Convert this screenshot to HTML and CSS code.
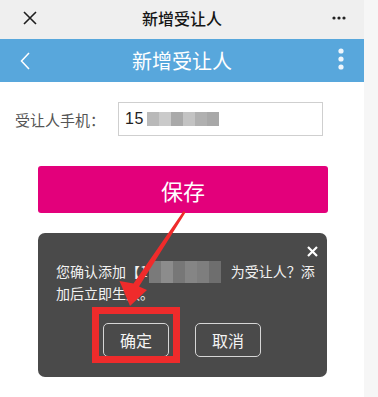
FILE: index.html
```html
<!DOCTYPE html>
<html lang="zh">
<head>
<meta charset="utf-8">
<title>新增受让人</title>
<link rel="stylesheet" href="styles.css">
</head>
<body>
<div class="app">
  <header class="topbar">
    <svg class="tb-close" width="14" height="14" viewBox="0 0 14 14"><path d="M1 1L13 13M13 1L1 13" stroke="#1e1e1e" stroke-width="1.6" fill="none"/></svg>
    <div class="tb-title">新增受让人</div>
    <svg class="tb-more" width="14" height="4" viewBox="0 0 14 4"><circle cx="2" cy="2" r="1.6" fill="#222"/><circle cx="7" cy="2" r="1.6" fill="#222"/><circle cx="12" cy="2" r="1.6" fill="#222"/></svg>
  </header>
  <nav class="navbar">
    <svg class="nb-back" width="10" height="18" viewBox="0 0 10 18"><path d="M9 1L1.5 9L9 17" stroke="#fff" stroke-width="1.5" fill="none"/></svg>
    <div class="nb-title">新增受让人</div>
    <svg class="nb-more" width="6" height="22" viewBox="0 0 6 22"><circle cx="3" cy="3" r="2.6" fill="#eef6fc"/><circle cx="3" cy="11" r="2.6" fill="#eef6fc"/><circle cx="3" cy="19" r="2.6" fill="#eef6fc"/></svg>
  </nav>
  <main class="content">
    <div class="form-row">
      <label class="form-label">受让人手机：</label>
      <div class="form-input"><span class="num">15</span><span class="mosaic mosaic-light"></span></div>
    </div>
    <button class="save-btn">保存</button>
    <div class="dialog">
      <svg class="dlg-close" width="11" height="11" viewBox="0 0 11 11"><path d="M1 1L10 10M10 1L1 10" stroke="#fff" stroke-width="2.2" fill="none"/></svg>
      <p class="dlg-text">您确认添加【1<span class="mosaic mosaic-dark"></span>为受让人？添<br>加后立即生效。</p>
      <div class="dlg-actions">
        <button class="dlg-btn">确定</button>
        <button class="dlg-btn">取消</button>
      </div>
    </div>
  </main>
  <div class="mark-box"></div>
  <svg class="mark-arrow" width="378" height="397" viewBox="0 0 378 397"><polygon points="183.5,211 185.5,212.5 139,286.5 147,290 130,306 119.5,281 133.5,283.5" fill="#ef2b2b"/></svg>
</div>
</body>
</html>
```
FILE: styles.css
```css
* { box-sizing: border-box; }
html, body { margin: 0; padding: 0; }
body {
  background: #f6f6f6;
  font-family: "Noto Sans CJK SC", "Noto Sans", sans-serif;
  width: 378px;
  height: 397px;
  overflow: hidden;
}
.app {
  width: 364px;
  height: 397px;
  background: #fff;
}
.topbar {
  height: 39px;
  background: #efefef;
  display: grid;
  grid-template-columns: 1fr auto 1fr;
  align-items: center;
  padding-bottom: 3px;
}
.tb-close { justify-self: start; margin-left: 23px; }
.tb-title { font-size: 16px; color: #151515; font-weight: 500; }
.tb-more { justify-self: end; margin-right: 18px; }
.navbar {
  height: 43px;
  background: #58a7dc;
  display: grid;
  grid-template-columns: 1fr auto 1fr;
  align-items: center;
}
.nb-back { justify-self: start; margin-left: 20px; }
.nb-title { font-size: 20px; color: #fff; font-weight: 400; }
.nb-more { justify-self: end; margin-right: 20px; margin-top: -4px; }
.content { padding-top: 20px; }
.form-row { display: flex; align-items: center; }
.form-label {
  width: 118px;
  padding-left: 15px;
  font-size: 15px;
  color: #555;
}
.form-input {
  width: 205px;
  height: 34px;
  border: 1px solid #cfcfcf;
  display: flex;
  align-items: center;
  padding-left: 6px;
  font-family: "Liberation Sans", sans-serif;
  font-size: 16px;
  color: #222;
}
.num { letter-spacing: 0.5px; }
.mosaic { display: inline-block; }
.mosaic-light {
  width: 72px;
  height: 14px;
  margin-left: 3px;
  background:
    linear-gradient(90deg, #b9b9b9 0 12px, #cacaca 12px 24px, #a9a9a9 24px 36px, #c3c3c3 36px 48px, #b0b0b0 48px 60px, #a8a8a8 60px 72px);
}
.save-btn {
  display: block;
  margin: 30px 0 0 38px;
  width: 290px;
  height: 47px;
  border: 0;
  border-radius: 3px;
  background: #e3007b;
  color: #fff;
  font-family: "Noto Sans CJK SC", sans-serif;
  font-size: 22px;
  padding: 0;
}
.dialog {
  position: relative;
  margin: 20px 0 0 38px;
  width: 289px;
  height: 144px;
  background: #4a4a4a;
  border-radius: 7px;
  padding: 28px 14px 0 18px;
}
.dlg-close { position: absolute; left: 269px; top: 13px; }
.dlg-text {
  margin: 0;
  font-size: 14px;
  line-height: 21px;
  color: #f2f2f2;
  white-space: nowrap;
}
.mosaic-dark {
  width: 72px;
  height: 22px;
  vertical-align: -6px;
  margin: 0 10px 0 1px;
  background:
    linear-gradient(90deg, #7a7a7a 0 12px, #8c8c8c 12px 24px, #777 24px 36px, #858585 36px 48px, #7e7e7e 48px 60px, #6e6e6e 60px 72px);
}
.dlg-actions {
  display: flex;
  justify-content: center;
  gap: 26px;
  margin-top: 19px;
  margin-left: -5px;
}
.dlg-btn {
  width: 66px;
  height: 34px;
  border: 1.5px solid #d6d6d6;
  border-radius: 5px;
  background: transparent;
  color: #f4f4f4;
  font-family: "Noto Sans CJK SC", sans-serif;
  font-size: 16px;
  padding: 0;
}
.mark-box {
  position: absolute;
  left: 92px;
  top: 307px;
  width: 88px;
  height: 56px;
  border: 7px solid #ee2b2b;
}
.mark-arrow { position: absolute; left: 0; top: 0; pointer-events: none; }
```
